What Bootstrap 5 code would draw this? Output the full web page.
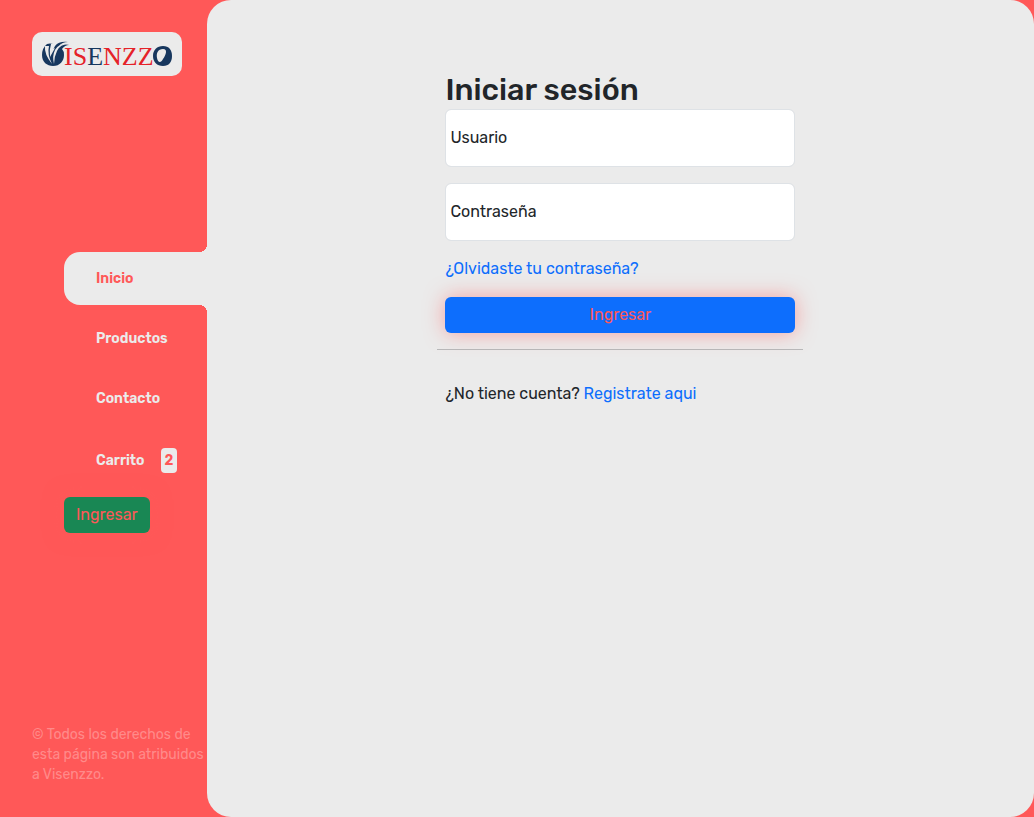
<!DOCTYPE html>
<html lang="es">
<head>
<meta charset="utf-8">
<meta name="viewport" content="width=device-width, initial-scale=1">
<title>Visenzzo - Iniciar sesión</title>
<link href="https://cdn.jsdelivr.net/npm/bootstrap@5.3.0/dist/css/bootstrap.min.css" rel="stylesheet">
<style>
  :root { --coral: #ff5858; --mist: #ebebeb; }
  body { font-family: Rubik, Roboto, sans-serif; font-size: 16px; line-height: 24px; background: var(--coral); }
  a { text-decoration: none; }
  .shell { display: grid; grid-template-columns: 1fr 4fr; }
  .side { padding: 32px 0 32px 32px; min-width: 0; }
  .brand-box { width: 150px; height: 44px; border-radius: 10px; background: var(--mist); }
  .menu { margin-left: 32px; }
  .menu-link { display: flex; align-items: center; gap: 16px; padding: 16px 0 16px 32px; font-size: 14px; line-height: 21px; font-weight: 600; color: var(--mist); }
  .menu-item + .menu-item { margin-top: 7px; }
  .menu-link.active { position: relative; background: var(--mist); color: var(--coral); border-radius: 16px 0 0 16px; }
  .menu-link.active::before, .menu-link.active::after { content: ""; position: absolute; right: 0; width: 8px; height: 8px; }
  .menu-link.active::before { bottom: 100%; background: radial-gradient(circle at 0 0, var(--coral) 8px, var(--mist) 8px); }
  .menu-link.active::after { top: 100%; background: radial-gradient(circle at 0 100%, var(--coral) 8px, var(--mist) 8px); }
  .count { padding: 2px 4px; border-radius: 4px; background: var(--mist); color: var(--coral); }
  .btn-enter { --bs-btn-color: var(--coral); border: 0; font-size: 16px; line-height: 24px; box-shadow: 0 0 20px rgba(255, 88, 88, .5); }
  .legal { font-size: 14px; line-height: 20px; color: #ff8a8a; }
  .panel { background: var(--mist); border-radius: 24px; padding-top: 72px; }
  .login { max-width: 366px; }
  .login .form-floating > label { padding: 16px 4px; }
  .login .form-control { border-color: #dee2e6; }
  .login hr { color: #212529; opacity: .25; margin: 16px 0 32px; }
</style>
</head>
<body>
<div class="shell min-vh-100">
  <aside class="side d-flex flex-column justify-content-between">
    <header>
      <a href="#" class="brand-box d-flex align-items-center justify-content-center" aria-label="Visenzzo">
        <svg width="150" height="44" viewBox="0 0 150 44" aria-hidden="true">
          <path fill="#17375e" d="M15 12Q10 16 10 23C10 30 15 34 21 34C28 34 32 29 32 23Q32 19 30 17Q33 13 37 13Q32 11 27 14Q30 10 36 10Q27 9 23 14L21 18L21 12Q18 11 15 12Z"/>
          <path fill="#ebebeb" d="M13 14Q12 22 20 32Q15 22 17 14ZM19 12Q17 18 18 25L23 16L21 17L21 12ZM37 12Q28 12 25 19Q22 25 22 32Q20 24 23 18Q27 11 37 11Z"/>
          <path fill-rule="evenodd" fill="#17375e" d="M131 14C137 14 140 18 140 24C140 30 137 34 131 34C125 34 121 30 121 24C121 18 125 14 131 14ZM131 17C126 17 124 21 125 26C126 31 129 31 131 27C134 23 136 17 131 17Z"/>
          <text x="32" y="33" font-family="'Liberation Serif', serif" font-size="26" fill="#e52229">IS<tspan fill="#17375e">E</tspan>NZZ</text>
        </svg>
      </a>
    </header>
    <nav class="menu mb-3" aria-label="Principal">
      <ul class="list-unstyled mb-0">
        <li class="menu-item"><a class="menu-link active" href="#" aria-current="page">Inicio</a></li>
        <li class="menu-item"><a class="menu-link" href="#">Productos</a></li>
        <li class="menu-item"><a class="menu-link" href="#">Contacto</a></li>
        <li class="menu-item"><a class="menu-link" href="#">Carrito <span class="count">2</span></a></li>
      </ul>
      <button type="button" class="btn btn-success btn-enter mt-2">Ingresar</button>
    </nav>
    <footer>
      <p class="legal mb-0">© Todos los derechos de esta página son atribuidos a Visenzzo.</p>
    </footer>
  </aside>
  <main class="panel">
    <form class="login mx-auto">
      <div class="px-2">
        <h1 class="h2 mb-0">Iniciar sesión</h1>
        <div class="form-floating mb-3">
          <input type="text" class="form-control" id="usuario" placeholder="Usuario">
          <label for="usuario">Usuario</label>
        </div>
        <div class="form-floating mb-3">
          <input type="password" class="form-control" id="clave" placeholder="Contraseña">
          <label for="clave">Contraseña</label>
        </div>
        <a href="#" class="d-block mb-3">¿Olvidaste tu contraseña?</a>
        <button type="submit" class="btn btn-primary btn-enter w-100">Ingresar</button>
      </div>
      <hr>
      <p class="px-2 mb-0">¿No tiene cuenta? <a href="#">Registrate aqui</a></p>
    </form>
  </main>
</div>
<script src="https://cdn.jsdelivr.net/npm/bootstrap@5.3.0/dist/js/bootstrap.bundle.min.js"></script>
</body>
</html>
